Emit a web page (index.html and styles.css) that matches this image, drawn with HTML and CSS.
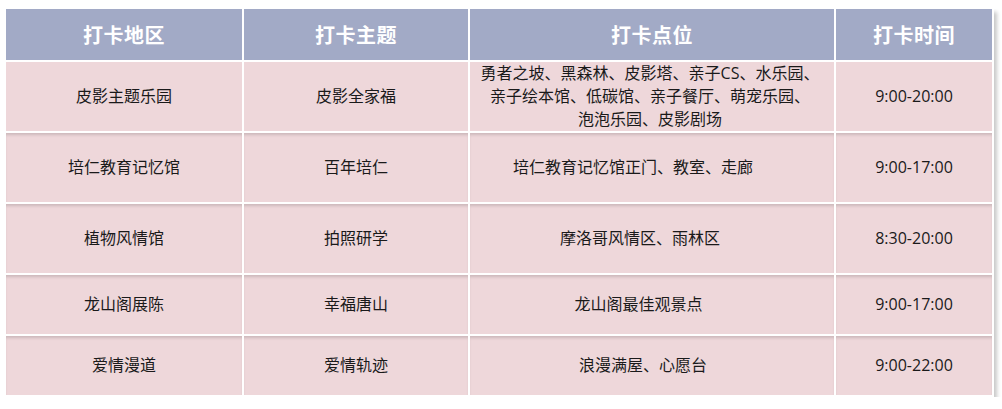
FILE: index.html
```html
<!DOCTYPE html>
<html lang="zh-CN">
<head>
<meta charset="utf-8">
<link rel="stylesheet" href="styles.css">
</head>
<body>
<table class="sheet">
  <colgroup>
    <col class="c1"><col class="c2"><col class="c3"><col class="c4">
  </colgroup>
  <thead>
    <tr class="head">
      <th>打卡地区</th><th>打卡主题</th><th>打卡点位</th><th>打卡时间</th>
    </tr>
  </thead>
  <tbody>
    <tr class="tall first">
      <td>皮影主题乐园</td>
      <td>皮影全家福</td>
      <td class="multi">勇者之坡、黑森林、皮影塔、亲子CS、水乐园、<br>亲子绘本馆、低碳馆、亲子餐厅、萌宠乐园、<br>泡泡乐园、皮影剧场</td>
      <td>9:00-20:00</td>
    </tr>
    <tr class="tall">
      <td>培仁教育记忆馆</td>
      <td>百年培仁</td>
      <td class="shift-a">培仁教育记忆馆正门、教室、走廊</td>
      <td>9:00-17:00</td>
    </tr>
    <tr class="tall">
      <td>植物风情馆</td>
      <td>拍照研学</td>
      <td class="shift-b">摩洛哥风情区、雨林区</td>
      <td>8:30-20:00</td>
    </tr>
    <tr class="short">
      <td>龙山阁展陈</td>
      <td>幸福唐山</td>
      <td class="shift-c">龙山阁最佳观景点</td>
      <td>9:00-17:00</td>
    </tr>
    <tr class="short">
      <td>爱情漫道</td>
      <td>爱情轨迹</td>
      <td class="shift-d">浪漫满屋、心愿台</td>
      <td>9:00-22:00</td>
    </tr>
  </tbody>
</table>
</body>
</html>
```

FILE: styles.css
```css
html, body {
  background: #ffffff;
}
body {
  margin: 9px 0 0 6px;
  font-family: "Open Sans", "Noto Sans CJK SC", sans-serif;
}
.sheet {
  border-collapse: separate;
  border-spacing: 0;
  width: 988px;
  table-layout: fixed;
  box-shadow: 3px 3px 4px rgba(0, 0, 0, 0.22);
}
.c1 { width: 238px; }
.c2 { width: 226px; }
.c3 { width: 366px; }
.c4 { width: 158px; }

.sheet th,
.sheet td {
  border-right: 2px solid #ffffff;
  border-bottom: 2px solid #ffffff;
  text-align: center;
  vertical-align: middle;
  padding: 0;
}
.head th {
  height: 51px;
  background: #a2aac6;
  color: #ffffff;
  font-family: "Noto Sans CJK SC", sans-serif;
  font-weight: 700;
  font-size: 20px;
  letter-spacing: 0.5px;
}
.sheet td {
  background: #eed7da;
  color: #1a1a1a;
  font-size: 16px;
  line-height: 23px;
  box-shadow: inset 0 3px 3px -1px rgba(0, 0, 0, 0.14);
}
.sheet .first td {
  box-shadow: none;
}
.sheet .tall td { height: 69px; }
.sheet .short td { height: 59px; }
.sheet .multi { padding-right: 4px; }
.sheet .shift-a { padding-right: 38px; }
.sheet .shift-b { padding-right: 24px; }
.sheet .shift-c { padding-right: 27px; }
.sheet .shift-d { padding-right: 18px; }
```
